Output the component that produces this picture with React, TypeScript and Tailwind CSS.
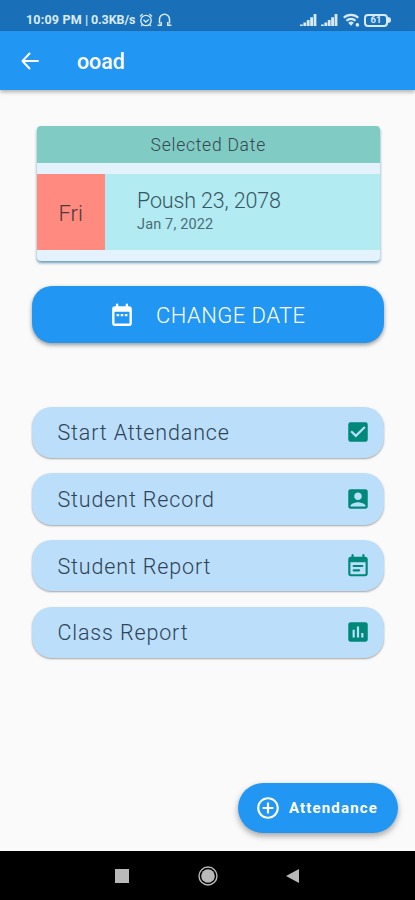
import type { ReactNode } from 'react';
import { MdAccountBox, MdAddCircleOutline, MdAssessment, MdCheckBox } from 'react-icons/md';

const actions = [
  { label: 'Start Attendance', icon: <MdCheckBox size={26} /> },
  { label: 'Student Record', icon: <MdAccountBox size={26} /> },
  { label: 'Student Report', icon: <NoteIcon /> },
  { label: 'Class Report', icon: <MdAssessment size={26} /> },
];

function NoteIcon() {
  return (
    <svg width="26" height="26" viewBox="0 0 24 24" fill="none" stroke="currentColor" strokeWidth="2" strokeLinecap="round">
      <rect x="4" y="4.5" width="16" height="16" rx="1.5" />
      <path d="M7 2V5M17 2V5M8 12h8M8 16h5" />
      <path d="M4 4.5h16v4H4z" fill="currentColor" stroke="none" />
    </svg>
  );
}

function CalendarIcon() {
  return (
    <svg width="26" height="26" viewBox="0 0 24 24" fill="none" stroke="currentColor" strokeWidth="2.2" strokeLinecap="round">
      <rect x="4" y="5" width="16" height="16" rx="1.5" />
      <path d="M7.5 2.5V5M16.5 2.5V5" />
      <path d="M4 5h16v4H4z" fill="currentColor" stroke="none" />
      <path d="M7 11h2.4v2.2H7zM10.8 11h2.4v2.2h-2.4zM14.6 11H17v2.2h-2.4z" fill="currentColor" stroke="none" />
    </svg>
  );
}

function Signal() {
  return (
    <svg width="17" height="12" viewBox="0 0 17 12" fill="currentColor">
      <path d="M0 10.5h2.8V12H0zM3.4 8.5h2.8V12H3.4zM6.8 6h2.8v6H6.8zM10.2 3.2H13V12h-2.8zM13.6 0h2.8v12h-2.8z" />
    </svg>
  );
}

function StatusBar() {
  return (
    <div className="flex h-[31px] items-center bg-[#1a70b8] pt-[9px] pl-[26px] text-[#d9ebfa]">
      <span className="w-[111px] text-[12.5px] leading-none font-bold tracking-[0.2px] whitespace-nowrap">
        10:09 PM<span className="tracking-[-0.1px]"> | 0.3KB/s</span>
      </span>
      <svg className="ml-[2px]" width="14" height="14" viewBox="0 0 14 14" fill="none" stroke="currentColor" strokeWidth="1.3">
        <circle cx="7" cy="7.5" r="5.2" />
        <path d="M1 3.5 3.6 1M13 3.5 10.4 1M4.5 6.8 6.8 9l3-2.6M3.2 11.7l-1 1.4M10.8 11.7l1 1.4" />
      </svg>
      <svg className="ml-[4px]" width="15" height="14" viewBox="0 0 15 14" fill="none" stroke="currentColor" strokeWidth="1.5">
        <path d="M2.5 10.5V6.3a5 5 0 0 1 10 0v4.2" />
        <path d="M.6 12.3h3.6V9M14.4 12.3h-3.6V9" />
      </svg>
      <div className="ml-[128px] flex items-center">
        <Signal />
        <span className="w-1" />
        <Signal />
        <svg className="ml-[5px]" width="17" height="14" viewBox="0 0 17 14" fill="none" stroke="currentColor" strokeWidth="2.2">
          <path d="M.8 4.8a10.4 10.4 0 0 1 14.4 0M3.5 7.7a6.5 6.5 0 0 1 9 0" />
          <path d="M5.2 9.8 8 12.8l2.8-3a4 4 0 0 0-5.6 0z" fill="currentColor" stroke="none" />
          <circle cx="14.4" cy="11.9" r="1.8" fill="currentColor" stroke="none" />
        </svg>
        <div className="ml-[4px] flex h-[13px] w-[24px] items-center justify-center rounded-[4px] border-2 border-current text-[9.5px] leading-none font-bold">
          61
        </div>
        <span className="h-[6px] w-[3px] rounded-r-full bg-current" />
      </div>
    </div>
  );
}

function AppBar() {
  return (
    <header className="relative flex h-[59px] items-center bg-[#2196f3] pl-[21px] text-white shadow-[0_2px_4px_rgba(0,0,0,0.3)]">
      <svg width="18" height="18" viewBox="0 0 18 18" fill="none" stroke="currentColor" strokeWidth="2" strokeLinecap="round" strokeLinejoin="round">
        <path d="M17 9H1.5M8.5 1.5 1.5 9l7 7.5" />
      </svg>
      <h1 className="mt-[2px] ml-[38px] text-[21.5px] leading-none font-medium tracking-[-0.1px]">ooad</h1>
    </header>
  );
}

function DateCard() {
  return (
    <section className="mr-[4px] ml-[4.5px] h-[135px] overflow-hidden rounded-[4px] bg-[#e3f2fd] shadow-[0_2px_3px_rgba(30,105,145,0.65)]">
      <div className="flex h-[37px] items-center justify-center bg-[#80cbc4] pt-px text-[17.5px] font-light tracking-[0.75px] text-[#37474f]">
        Selected Date
      </div>
      <div className="mt-[11px] flex h-[76px] bg-[#b2ebf2]">
        <div className="flex w-[68.5px] items-center justify-center bg-[#ff8a80] pt-[2px] text-[22px] font-light text-[#4b3a3a]">Fri</div>
        <div className="flex flex-col pt-[14px] pl-[32px] text-[#37555f]">
          <span className="text-[21.5px] leading-[25px] font-light tracking-[-0.15px]">Poush 23, 2078</span>
          <span className="mt-[3px] text-[14.5px] leading-[18px] tracking-[0.15px] text-[#4c6d76]">Jan 7, 2022</span>
        </div>
      </div>
    </section>
  );
}

function ActionButton({ label, icon }: { label: string; icon: ReactNode }) {
  return (
    <button className="flex h-[51.5px] w-full items-center justify-between rounded-[20px] bg-[#bbdefb] pr-[13px] pl-[25.5px] shadow-[0_1px_2px_rgba(0,0,0,0.35)]">
      <span className="pt-[2px] text-[21.5px] font-light tracking-[0.85px] text-[#2f4354]">{label}</span>
      <span className="text-[#00897b]">{icon}</span>
    </button>
  );
}

export default function App() {
  return (
    <div className="flex h-[900px] w-[415px] flex-col bg-[#fafafa] font-[Roboto,sans-serif]">
      <StatusBar />
      <AppBar />
      <main className="flex flex-1 flex-col pt-[36px] pr-[31px] pl-[32px]">
        <DateCard />
        <button className="mt-[25px] flex h-[57px] items-center rounded-[20px] bg-[#2196f3] pl-[77px] text-white shadow-[0_2px_4px_rgba(0,0,0,0.4)]">
          <CalendarIcon />
          <span className="ml-[21px] pt-[2px] text-[22px] font-light tracking-[0.45px]">CHANGE DATE</span>
        </button>
        <div className="mt-[63.5px] flex flex-col gap-[15.2px]">
          {actions.map((a) => (
            <ActionButton key={a.label} label={a.label} icon={a.icon} />
          ))}
        </div>
        <button className="mt-auto -mr-[14px] mb-[18px] flex h-[50.5px] w-[160px] items-center self-end rounded-full bg-[#2196f3] pl-[17px] text-white shadow-[0_3px_6px_rgba(0,0,0,0.35)]">
          <MdAddCircleOutline size={26} />
          <span className="ml-[8px] pt-px text-[15px] font-bold tracking-[1.15px]">Attendance</span>
        </button>
      </main>
      <nav className="flex h-[49px] items-center bg-black text-[#b9b9b9]">
        <span className="ml-[115px] h-[14px] w-[14px] bg-current" />
        <svg className="ml-[69px]" width="20" height="20" viewBox="0 0 20 20" fill="none" stroke="currentColor">
          <circle cx="10" cy="10" r="9" strokeWidth="1.4" />
          <circle cx="10" cy="10" r="6.8" fill="currentColor" stroke="none" />
        </svg>
        <svg className="ml-[68px]" width="13" height="14" viewBox="0 0 13 14" fill="currentColor">
          <path d="M0 7 13 0v14z" />
        </svg>
      </nav>
    </div>
  );
}
